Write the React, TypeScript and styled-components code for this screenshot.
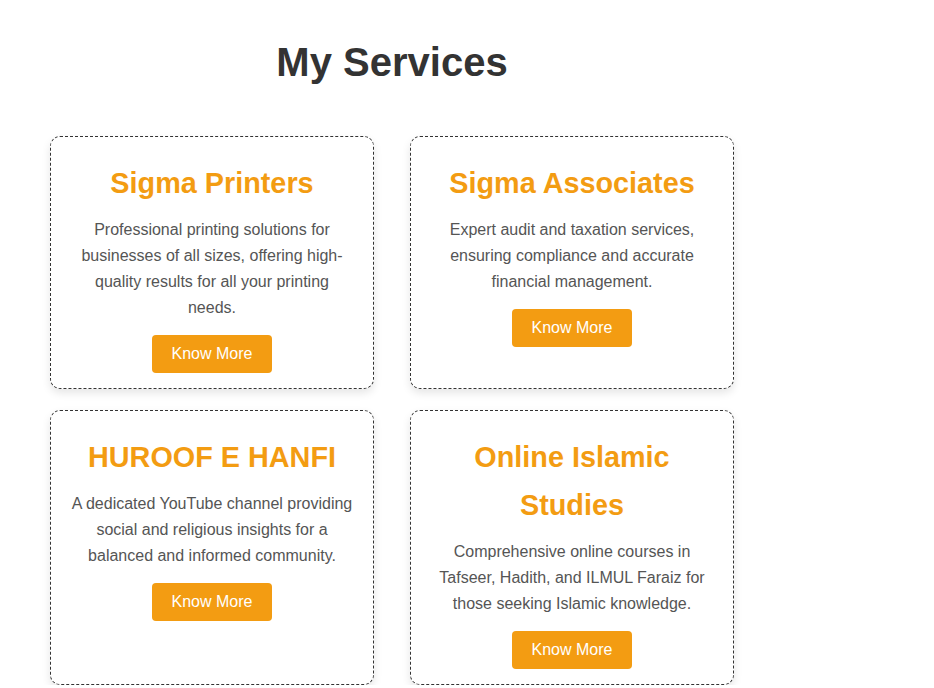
import React from "react";
import styled, { createGlobalStyle } from "styled-components";

const GlobalStyle = createGlobalStyle`
  html, body { margin: 0; padding: 0; background: #ffffff; }
  body { font-family: "Liberation Sans", Arial, sans-serif; }
`;

const Section = styled.section`
  width: 684px;
  margin-left: 50px;
  padding-top: 39px;
`;

const Title = styled.h2`
  margin: 0 0 51px;
  font-size: 40px;
  line-height: 46px;
  font-weight: 700;
  color: #333333;
  text-align: center;
`;

const Grid = styled.div`
  display: grid;
  grid-template-columns: 324px 324px;
  column-gap: 36px;
  row-gap: 21px;
`;

const Card = styled.div`
  box-sizing: border-box;
  border: 1px dashed #333333;
  border-radius: 10px;
  padding: 22px 20px 15px;
  background: #ffffff;
  box-shadow: 0 4px 8px rgba(0, 0, 0, 0.1);
  text-align: center;
`;

const CardTitle = styled.h3`
  margin: 0 0 10px;
  font-size: 28.8px;
  line-height: 48px;
  font-weight: 700;
  color: #f39c12;
`;

const CardText = styled.p`
  margin: 0 0 14px;
  font-size: 16px;
  line-height: 26px;
  color: #555555;
`;

const Button = styled.button`
  border: none;
  border-radius: 4px;
  background: #f39c12;
  color: #ffffff;
  font-family: "Liberation Sans", Arial, sans-serif;
  font-size: 16px;
  line-height: 18px;
  padding: 10px 20px;
  cursor: pointer;
`;

const services = [
  {
    title: "Sigma Printers",
    text: "Professional printing solutions for businesses of all sizes, offering high-quality results for all your printing needs.",
  },
  {
    title: "Sigma Associates",
    text: "Expert audit and taxation services, ensuring compliance and accurate financial management.",
  },
  {
    title: "HUROOF E HANFI",
    text: "A dedicated YouTube channel providing social and religious insights for a balanced and informed community.",
  },
  {
    title: "Online Islamic Studies",
    text: "Comprehensive online courses in Tafseer, Hadith, and ILMUL Faraiz for those seeking Islamic knowledge.",
  },
];

export default function App() {
  return (
    <>
      <GlobalStyle />
      <Section>
        <Title>My Services</Title>
        <Grid>
          {services.map((s) => (
            <Card key={s.title}>
              <CardTitle>{s.title}</CardTitle>
              <CardText>{s.text}</CardText>
              <Button>Know More</Button>
            </Card>
          ))}
        </Grid>
      </Section>
    </>
  );
}
